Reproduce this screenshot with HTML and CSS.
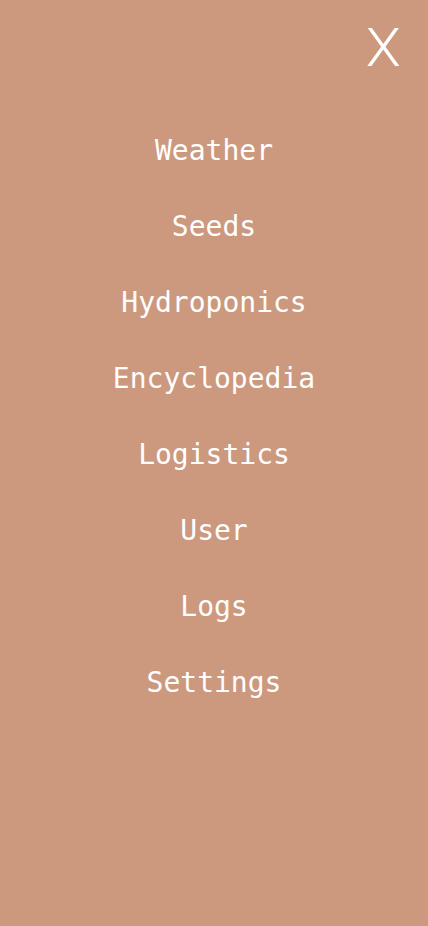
FILE: index.html
```html
<!DOCTYPE html>
<html lang="en">
<head>
<meta charset="utf-8">
<title>Menu</title>
<link rel="stylesheet" href="styles.css">
</head>
<body>
<div class="menu">
  <header class="menu-header">
    <button class="close">X</button>
  </header>
  <nav class="menu-list">
    <a class="menu-item" href="#">Weather</a>
    <a class="menu-item" href="#">Seeds</a>
    <a class="menu-item" href="#">Hydroponics</a>
    <a class="menu-item" href="#">Encyclopedia</a>
    <a class="menu-item" href="#">Logistics</a>
    <a class="menu-item" href="#">User</a>
    <a class="menu-item" href="#">Logs</a>
    <a class="menu-item" href="#">Settings</a>
  </nav>
</div>
</body>
</html>
```

FILE: styles.css
```css
html, body {
  margin: 0;
  padding: 0;
  background: #cc997e;
}
.menu {
  width: 428px;
  height: 926px;
  background: #cc997e;
  display: flex;
  flex-direction: column;
}
.menu-header {
  display: flex;
  justify-content: flex-end;
  height: 113px;
  padding-right: 29px;
  box-sizing: border-box;
}
.close {
  background: none;
  border: none;
  padding: 0;
  margin-top: 19px;
  height: 58px;
  color: #ffffff;
  font-family: Roboto, "Noto Sans", sans-serif;
  font-weight: 300;
  font-size: 53px;
  line-height: 58px;
  transform: scaleX(1.08);
}
.menu-list {
  display: flex;
  flex-direction: column;
  align-items: center;
}
.menu-item {
  display: block;
  height: 76px;
  line-height: 76px;
  color: #ffffff;
  text-decoration: none;
  font-family: "DejaVu Sans Mono", "Liberation Mono", monospace;
  font-size: 28px;
}
```
